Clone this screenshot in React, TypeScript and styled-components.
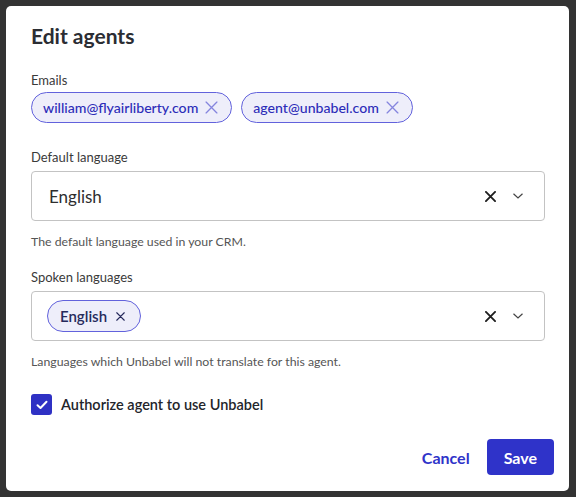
import React, { FC } from "react";
import styled, { createGlobalStyle } from "styled-components";

const GlobalStyle = createGlobalStyle`
  html, body {
    margin: 0;
    padding: 0;
    background: #333333;
    font-family: Lato, "Open Sans", sans-serif;
  }
`;

const Backdrop = styled.div`
  height: 100vh;
  box-sizing: border-box;
  padding: 6px 7px 6px 6px;
  display: flex;
  background: #333333;
`;

const Modal = styled.div`
  flex: 1;
  background: #ffffff;
  border-radius: 5px;
  display: flex;
  flex-direction: column;
  padding: 15px 24px 16px 25px;
`;

const Title = styled.h2`
  margin: 0 0 21px;
  font-size: 21px;
  font-weight: 700;
  color: #2b2d33;
  line-height: 30px;
`;

const Field = styled.div<{ $gap?: number }>`
  display: flex;
  flex-direction: column;
  margin-bottom: ${(p) => p.$gap ?? 0}px;
`;

const Label = styled.label<{ $mb?: number }>`
  font-size: 13px;
  color: #3a3a3a;
  line-height: 16px;
  margin-bottom: ${(p) => p.$mb ?? 6}px;
`;

const ChipRow = styled.div`
  display: flex;
  gap: 9px;
`;

const Chip = styled.span<{ $dark?: boolean }>`
  display: inline-flex;
  align-items: center;
  gap: ${(p) => (p.$dark ? 9 : 7)}px;
  height: ${(p) => (p.$dark ? 32 : 31)}px;
  box-sizing: border-box;
  padding: ${(p) => (p.$dark ? "0 15px 0 12px" : "0 13px 0 11px")};
  border: 1px solid #6262dc;
  border-radius: 16px;
  background: #eeeefa;
  color: ${(p) => (p.$dark ? "#262a5c" : "#2c2cb8")};
  font-size: ${(p) => (p.$dark ? 15 : 14.1)}px;
  font-weight: ${(p) => (p.$dark ? 600 : 500)};
`;

const Select = styled.div<{ $pl?: number }>`
  display: flex;
  align-items: center;
  height: 50px;
  box-sizing: border-box;
  border: 1px solid #c3c3c3;
  border-radius: 4px;
  padding: 0 20px 0 ${(p) => p.$pl ?? 17}px;
`;

const Value = styled.div`
  flex: 1;
  display: flex;
  align-items: center;
  font-size: 17px;
  color: #2e2e2e;
`;

const Indicators = styled.div`
  display: flex;
  align-items: center;
  gap: 16px;
`;

const Helper = styled.p`
  margin: 13px 0 0;
  font-size: 12.3px;
  color: #555555;
  line-height: 16px;
`;

const CheckRow = styled.label`
  display: flex;
  align-items: center;
  gap: 9px;
  margin-top: 24px;
  font-size: 14.5px;
  font-weight: 600;
  color: #23252b;
`;

const Box = styled.span`
  width: 21px;
  height: 21px;
  border-radius: 3px;
  background: #2f31c4;
  display: flex;
  align-items: center;
  justify-content: center;
`;

const Footer = styled.div`
  margin-top: auto;
  display: flex;
  justify-content: flex-end;
  align-items: center;
  gap: 17px;
  margin-right: -9px;
`;

const Button = styled.button<{ $primary?: boolean }>`
  font-family: inherit;
  font-size: 16px;
  font-weight: 700;
  height: 36px;
  border-radius: 4px;
  border: none;
  cursor: pointer;
  padding: ${(p) => (p.$primary ? "0 17px" : "0")};
  background: ${(p) => (p.$primary ? "#2f33c9" : "transparent")};
  color: ${(p) => (p.$primary ? "#ffffff" : "#2f33c9")};
`;

const ThinX: FC<{ size: number; color: string; w?: number }> = ({ size, color, w = 1.2 }) => (
  <svg width={size} height={size} viewBox="0 0 12 12">
    <path d="M1 1 L11 11 M11 1 L1 11" stroke={color} strokeWidth={w} strokeLinecap="round" />
  </svg>
);

const Chevron = () => (
  <svg width="12" height="8" viewBox="0 0 12 8">
    <path d="M1.5 1.8 L6 6 L10.5 1.8" stroke="#444" strokeWidth="1.2" fill="none" />
  </svg>
);

const App: FC = () => (
  <>
    <GlobalStyle />
    <Backdrop>
      <Modal>
        <Title>Edit agents</Title>
        <Field $gap={26}>
          <Label $mb={4}>Emails</Label>
          <ChipRow>
            <Chip>
              william@flyairliberty.com
              <ThinX size={13} color="#8585de" />
            </Chip>
            <Chip>
              agent@unbabel.com
              <ThinX size={13} color="#8585de" />
            </Chip>
          </ChipRow>
        </Field>
        <Field $gap={19}>
          <Label>Default language</Label>
          <Select>
            <Value>English</Value>
            <Indicators>
              <ThinX size={11} color="#1e1e1e" w={2} />
              <Chevron />
            </Indicators>
          </Select>
          <Helper>The default language used in your CRM.</Helper>
        </Field>
        <Field>
          <Label>Spoken languages</Label>
          <Select $pl={15}>
            <Value>
              <Chip $dark>
                English
                <ThinX size={9} color="#262a5c" w={1.5} />
              </Chip>
            </Value>
            <Indicators>
              <ThinX size={11} color="#1e1e1e" w={2} />
              <Chevron />
            </Indicators>
          </Select>
          <Helper>Languages which Unbabel will not translate for this agent.</Helper>
        </Field>
        <CheckRow>
          <Box>
            <svg width="12" height="10" viewBox="0 0 12 10">
              <path d="M1.5 5.2 L4.5 8 L10.5 1.8" stroke="#fff" strokeWidth="2" fill="none" strokeLinecap="round" strokeLinejoin="round" />
            </svg>
          </Box>
          Authorize agent to use Unbabel
        </CheckRow>
        <Footer>
          <Button>Cancel</Button>
          <Button $primary>Save</Button>
        </Footer>
      </Modal>
    </Backdrop>
  </>
);

export default App;
